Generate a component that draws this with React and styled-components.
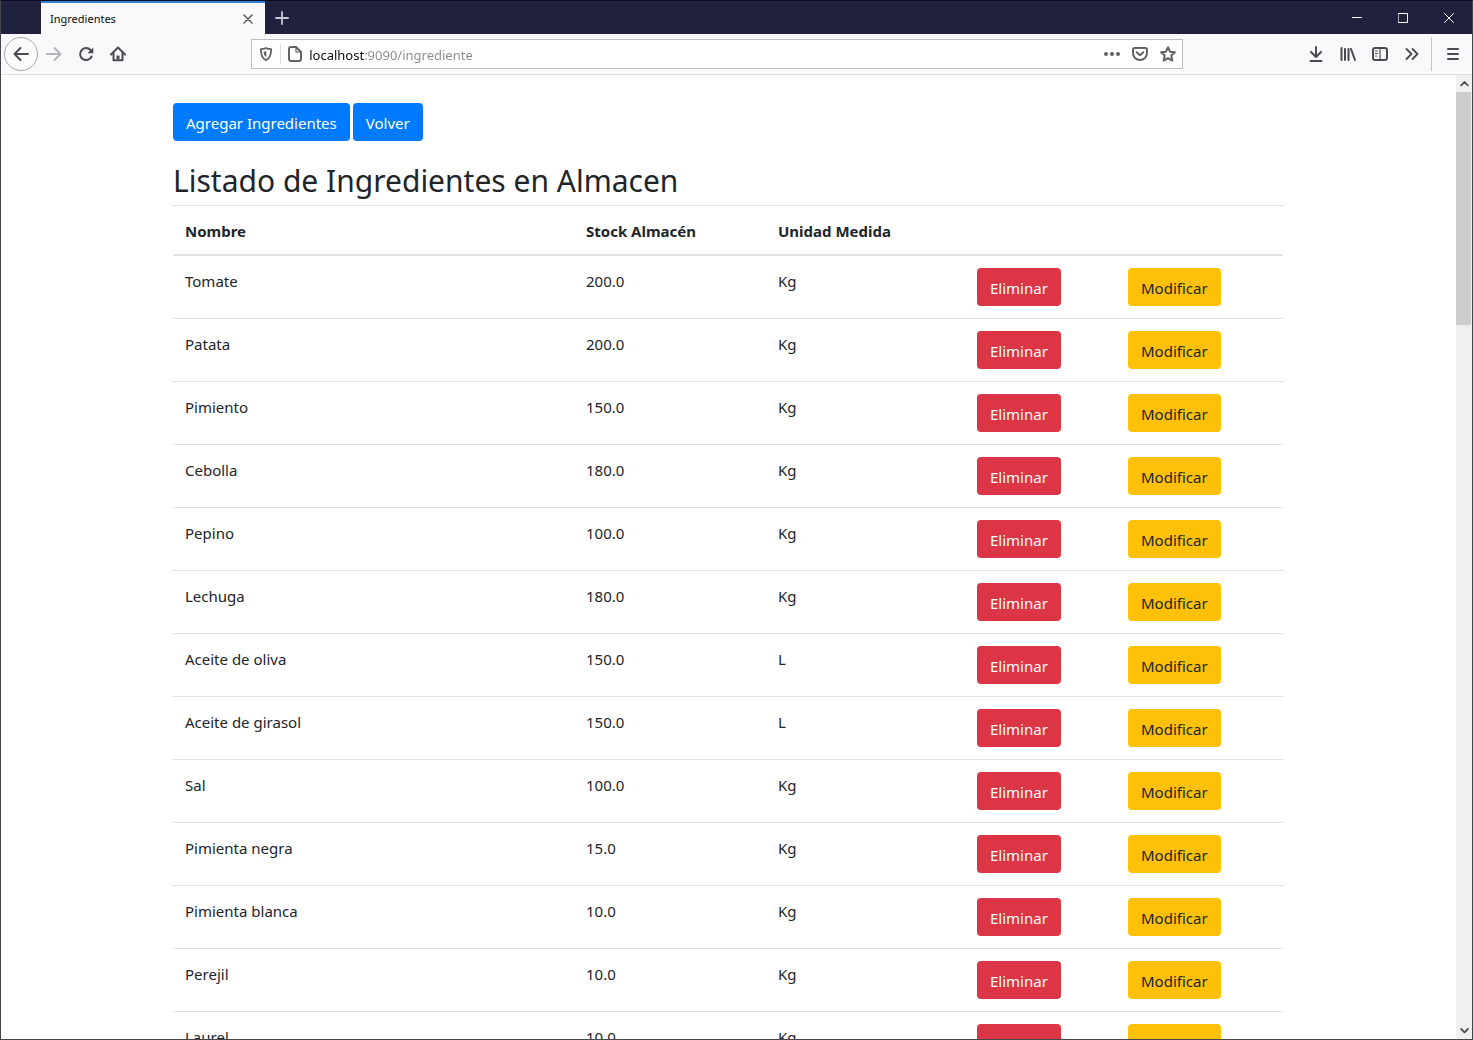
import React from "react";
import styled, { createGlobalStyle, css } from "styled-components";

const uiFont = `"Segoe UI", "Noto Sans", "Open Sans", sans-serif`;

const GlobalStyle = createGlobalStyle`
  *, *::before, *::after { box-sizing: border-box; }
  body { margin: 0; background: #fff; font-family: ${uiFont}; }
  button, input { font-family: inherit; margin: 0; }
`;

const Window = styled.div`
  display: flex;
  flex-direction: column;
  height: 100vh;
  overflow: hidden;
  border: 1px solid #45454b;
  border-top-color: #0b0b25;
  background: #fff;
`;

const TitleBar = styled.header`
  display: flex;
  flex: none;
  height: 33px;
  padding-left: 40px;
  background: #20213f;
`;

const Tab = styled.div`
  display: flex;
  align-items: center;
  width: 224px;
  padding: 0 8px 0 9px;
  border-top: 2px solid #2f7fd6;
  background: #f9f9fb;
  color: #0c0c0d;
`;

const TabTitle = styled.span`
  flex: 1;
  font-size: 11px;
  line-height: 16px;
`;

const BareButton = styled.button`
  display: flex;
  align-items: center;
  justify-content: center;
  flex: none;
  padding: 0;
  border: 0;
  background: transparent;
  color: inherit;
`;

const TabClose = styled(BareButton)`
  width: 18px;
  height: 18px;
  color: #5a5a5e;
`;

const NewTab = styled(BareButton)`
  width: 34px;
  color: #c9c9d2;
`;

const WindowControls = styled.div`
  display: flex;
  margin-left: auto;
`;

const WindowControl = styled(BareButton)`
  width: 46px;
  color: #fff;
`;

const Toolbar = styled.nav`
  display: flex;
  align-items: center;
  flex: none;
  height: 41px;
  padding: 0 3px;
  border-bottom: 1px solid #dcdcdf;
  background: #f9f9fb;
  color: #4a4a4f;
`;

const ToolButton = styled(BareButton)`
  width: 32px;
  height: 32px;
  color: ${(p) => (p.$muted ? "#b5b5b9" : "inherit")};
  ${(p) =>
    p.$round &&
    css`
      width: 34px;
      height: 34px;
      border: 1px solid #a9a9ad;
      border-radius: 50%;
      background: #fcfcfd;
    `}
`;

const Spacer = styled.div`
  flex: 1;
`;

const UrlBar = styled.div`
  display: flex;
  align-items: center;
  flex: 8;
  height: 30px;
  margin: 0 1px;
  border: 1px solid #bebec1;
  background: #fff;
  color: #636367;
`;

const UrlButton = styled(BareButton)`
  width: 28px;
  height: 28px;
`;

const UrlDivider = styled.span`
  width: 1px;
  height: 20px;
  background: #dcdcdf;
`;

const UrlInput = styled.input`
  flex: 1;
  min-width: 0;
  height: 28px;
  padding: 2px 0 0;
  border: 0;
  outline: 0;
  font-size: 13px;
  color: #77777b;
  background: linear-gradient(90deg, #0c0c0d 55px, #8a8a8e 55px);
  background-clip: text;
  -webkit-background-clip: text;
  -webkit-text-fill-color: transparent;
`;

const MenuDivider = styled.span`
  width: 1px;
  height: 34px;
  margin: 0 5px 0 3px;
  background: #c6c6c9;
`;

const Viewport = styled.div`
  display: flex;
  flex: 1;
  min-height: 0;
`;

const Page = styled.main`
  flex: 1;
  min-width: 0;
  padding-right: 1px;
  overflow: hidden;
  color: #212529;
  font-size: 15px;
  line-height: 24px;
`;

const Container = styled.div`
  max-width: 1110px;
  margin: 0 auto;
  padding-top: 28px;
`;

const Actions = styled.div`
  display: flex;
  gap: 3px;
`;

const tones = {
  primary: { background: "#007bff", color: "#fff" },
  danger: { background: "#dc3545", color: "#fff" },
  warning: { background: "#ffc107", color: "#212529" },
};

const Button = styled.button`
  display: block;
  height: 38px;
  padding: 2px 13px 0;
  border: 0;
  border-radius: 4px;
  background: ${(p) => tones[p.$tone].background};
  color: ${(p) => tones[p.$tone].color};
  font-size: 15px;
  line-height: 24px;
  white-space: nowrap;
`;

const Heading = styled.h2`
  margin: 20px 0 4px;
  font-size: 30px;
  font-weight: 400;
  line-height: 40px;
`;

const Table = styled.table`
  width: 100%;
  table-layout: fixed;
  border-collapse: collapse;
`;

const Column = styled.col`
  width: ${(p) => p.$width};
`;

const HeadCell = styled.th`
  padding: 13px 12px 11px;
  border-top: 1px solid #dee2e6;
  border-bottom: 2px solid #dee2e6;
  text-align: left;
  font-weight: 700;
`;

const Cell = styled.td`
  padding: 13px 12px 12px;
  border-top: 1px solid #dee2e6;
  vertical-align: top;
`;

const ActionCell = styled(Cell)`
  padding-top: 12px;
`;

const Scrollbar = styled.div`
  display: flex;
  flex-direction: column;
  flex: none;
  width: 16px;
  background: #f0f0f0;
  color: #505050;
`;

const ScrollArrow = styled(BareButton)`
  height: 17px;
`;

const Track = styled.div`
  flex: 1;
`;

const Thumb = styled.div`
  width: 15px;
  height: 25%;
  background: #cdcdcd;
`;

function Icon({ size = 16, width = 2, children }) {
  return (
    <svg
      width={size}
      height={size}
      viewBox={`0 0 ${size} ${size}`}
      fill="none"
      stroke="currentColor"
      strokeWidth={width}
      strokeLinecap="round"
      strokeLinejoin="round"
      aria-hidden="true"
    >
      {children}
    </svg>
  );
}

const BackIcon = () => <Icon><path d="M15 8H1.5M7.5 2L1.5 8l6 6" /></Icon>;
const ForwardIcon = () => <Icon><path d="M1 8h13.5M8.500 2l6 6-6 6" /></Icon>;
const ReloadIcon = () => (
  <Icon>
    <path d="M13.600 10.500A6 6 0 1 1 12.500 4" />
    <path d="M15.300 1.500V7.300H9.500z" fill="currentColor" stroke="none" />
  </Icon>
);
const HomeIcon = () => (
  <Icon>
    <path d="M1 8.500l7-7 7 7M3.500 7.500v6.700h9V7.500" />
    <path d="M8 13.500V9.500" strokeWidth="3" strokeLinecap="butt" />
  </Icon>
);
const ShieldIcon = () => (
  <Icon>
    <path d="M8 2c1.800 1 3.500 1.200 5.200 1.200 0 5.300-.8 8.800-5.200 10.900C3.600 12 2.800 8.500 2.800 3.200 4.500 3.200 6.200 3 8 2z" strokeWidth="1.800" />
    <path d="M8.300 5.200v6C6.400 10.100 5.700 8.500 5.600 5.800z" fill="currentColor" stroke="none" />
  </Icon>
);
const PageIcon = () => (
  <Icon>
    <path d="M9 1H4a2 2 0 0 0-2 2v10a2 2 0 0 0 2 2h8a2 2 0 0 0 2-2V6z" />
    <path d="M9 1v5h5" strokeWidth="1.200" />
  </Icon>
);
const DotsIcon = () => (
  <Icon>
    <g fill="currentColor" stroke="none">
      <circle cx="2" cy="8" r="2" />
      <circle cx="8" cy="8" r="2" />
      <circle cx="14" cy="8" r="2" />
    </g>
  </Icon>
);
const PocketIcon = () => (
  <Icon>
    <path d="M2.500 2h11A1.500 1.500 0 0 1 15 3.500V7A7 7 0 0 1 1 7V3.500A1.500 1.500 0 0 1 2.500 2z" />
    <path d="M4.700 6.200L8 9.300l3.300-3.100" />
  </Icon>
);
const StarIcon = () => (
  <Icon>
    <path d="M8 1.200l2 4.500 4.900.5-3.600 3.400 1 5-4.300-2.500-4.300 2.500 1-5L1.100 6.200 6 5.700z" />
  </Icon>
);
const DownloadIcon = () => <Icon><path d="M8 1v9.500M3 6l5 5 5-5M2.500 15h11" /></Icon>;
const LibraryIcon = () => (
  <Icon>
    <path d="M1.500 2v12M5 3v11M8.500 3v11M11 3l4 11" />
  </Icon>
);
const SidebarIcon = () => (
  <Icon>
    <rect x="1" y="2" width="14" height="12" rx="2.200" />
    <path d="M8 2v12M3.500 5h2M3.500 7.500h2M3.500 10h1.200" strokeWidth="1.200" />
  </Icon>
);
const OverflowIcon = () => <Icon width={1.8}><path d="M2.500 3l5 5-5 5M8.500 3l5 5-5 5" /></Icon>;
const MenuIcon = () => <Icon><path d="M3 3h10M3 8h10M3 13h10" /></Icon>;

const ingredients = [
  ["Tomate", "200.0", "Kg"],
  ["Patata", "200.0", "Kg"],
  ["Pimiento", "150.0", "Kg"],
  ["Cebolla", "180.0", "Kg"],
  ["Pepino", "100.0", "Kg"],
  ["Lechuga", "180.0", "Kg"],
  ["Aceite de oliva", "150.0", "L"],
  ["Aceite de girasol", "150.0", "L"],
  ["Sal", "100.0", "Kg"],
  ["Pimienta negra", "15.0", "Kg"],
  ["Pimienta blanca", "10.0", "Kg"],
  ["Perejil", "10.0", "Kg"],
  ["Laurel", "10.0", "Kg"],
];

function BrowserTitleBar() {
  return (
    <TitleBar>
      <Tab>
        <TabTitle>Ingredientes</TabTitle>
        <TabClose aria-label="Cerrar pestaña">
          <Icon size={10} width={1.5}><path d="M1 1l8 8M9 1L1 9" /></Icon>
        </TabClose>
      </Tab>
      <NewTab aria-label="Nueva pestaña">
        <Icon size={14} width={1.8}><path d="M7 1v12M1 7h12" /></Icon>
      </NewTab>
      <WindowControls>
        <WindowControl aria-label="Minimizar">
          <Icon size={10} width={1}><path d="M.5 4.500h9" /></Icon>
        </WindowControl>
        <WindowControl aria-label="Maximizar">
          <Icon size={10} width={1}><path d="M.5.5h9v9H.5z" /></Icon>
        </WindowControl>
        <WindowControl aria-label="Cerrar">
          <Icon size={10} width={1}><path d="M.5.5l9 9M9.500.5l-9 9" /></Icon>
        </WindowControl>
      </WindowControls>
    </TitleBar>
  );
}

function BrowserToolbar() {
  return (
    <Toolbar>
      <ToolButton $round aria-label="Atrás"><BackIcon /></ToolButton>
      <ToolButton $muted aria-label="Adelante"><ForwardIcon /></ToolButton>
      <ToolButton aria-label="Recargar"><ReloadIcon /></ToolButton>
      <ToolButton aria-label="Inicio"><HomeIcon /></ToolButton>
      <Spacer />
      <UrlBar>
        <UrlButton aria-label="Protección"><ShieldIcon /></UrlButton>
        <UrlDivider />
        <UrlButton aria-label="Información del sitio"><PageIcon /></UrlButton>
        <UrlInput aria-label="Dirección" defaultValue="localhost:9090/ingrediente" spellCheck={false} />
        <UrlButton aria-label="Acciones de página"><DotsIcon /></UrlButton>
        <UrlButton aria-label="Guardar en Pocket"><PocketIcon /></UrlButton>
        <UrlButton aria-label="Añadir a marcadores"><StarIcon /></UrlButton>
      </UrlBar>
      <Spacer />
      <ToolButton aria-label="Descargas"><DownloadIcon /></ToolButton>
      <ToolButton aria-label="Biblioteca"><LibraryIcon /></ToolButton>
      <ToolButton aria-label="Barra lateral"><SidebarIcon /></ToolButton>
      <ToolButton aria-label="Más herramientas"><OverflowIcon /></ToolButton>
      <MenuDivider />
      <ToolButton aria-label="Menú"><MenuIcon /></ToolButton>
    </Toolbar>
  );
}

function IngredientTable() {
  return (
    <Table aria-labelledby="listado">
      <colgroup>
        <Column $width="auto" />
        <Column $width="192px" />
        <Column $width="199px" />
        <Column $width="151px" />
        <Column $width="167px" />
      </colgroup>
      <thead>
        <tr>
          <HeadCell scope="col">Nombre</HeadCell>
          <HeadCell scope="col">Stock Almacén</HeadCell>
          <HeadCell scope="col">Unidad Medida</HeadCell>
          <HeadCell as="td" />
          <HeadCell as="td" />
        </tr>
      </thead>
      <tbody>
        {ingredients.map(([name, stock, unit]) => (
          <tr key={name}>
            <Cell>{name}</Cell>
            <Cell>{stock}</Cell>
            <Cell>{unit}</Cell>
            <ActionCell><Button $tone="danger">Eliminar</Button></ActionCell>
            <ActionCell><Button $tone="warning">Modificar</Button></ActionCell>
          </tr>
        ))}
      </tbody>
    </Table>
  );
}

export default function App() {
  return (
    <>
      <GlobalStyle />
      <Window>
        <BrowserTitleBar />
        <BrowserToolbar />
        <Viewport>
          <Page>
            <Container>
              <Actions>
                <Button $tone="primary">Agregar Ingredientes</Button>
                <Button $tone="primary">Volver</Button>
              </Actions>
              <Heading id="listado">Listado de Ingredientes en Almacen</Heading>
              <IngredientTable />
            </Container>
          </Page>
          <Scrollbar>
            <ScrollArrow aria-label="Subir">
              <Icon size={9} width={1.8}><path d="M1.200 6.300l3.300-3.300 3.300 3.300" /></Icon>
            </ScrollArrow>
            <Track><Thumb /></Track>
            <ScrollArrow aria-label="Bajar">
              <Icon size={9} width={1.8}><path d="M1.200 3l3.300 3.300L7.800 3" /></Icon>
            </ScrollArrow>
          </Scrollbar>
        </Viewport>
      </Window>
    </>
  );
}
